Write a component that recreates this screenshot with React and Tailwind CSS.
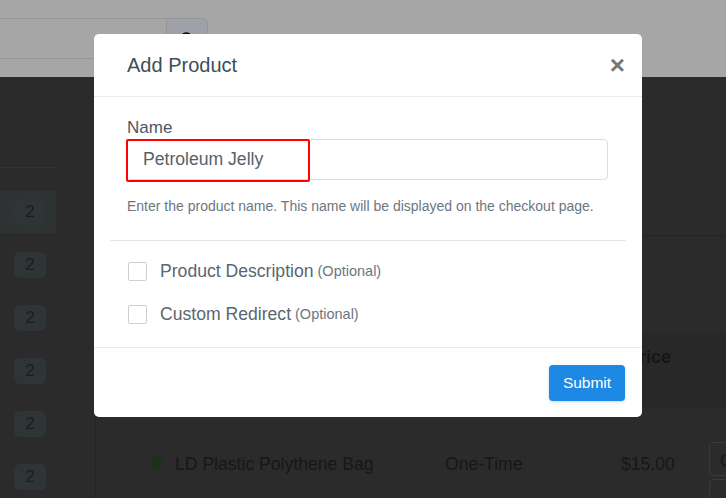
import { FiSearch } from "react-icons/fi";

const font = { fontFamily: '"Liberation Sans", Arial, sans-serif' };

export default function App() {
  return (
    <div
      className="relative w-[726px] h-[498px] overflow-hidden bg-[#2b2b2b]"
      style={font}
    >
      {/* TOP BAR */}
      <div className="h-[77px] bg-[#a6a6a6] pt-[18px] flex">
        <div className="w-[166px] h-[41px] border-y border-[#959595]" />
        <div className="w-[42px] h-[41px] bg-[#9ea2a8] border border-[#959595] rounded-tr-[5px] flex justify-center pt-[12px]">
          <FiSearch className="text-black w-[16px] h-[16px]" />
        </div>
      </div>

      <div className="flex h-[421px]">
        {/* SIDEBAR */}
        <div className="w-[96px] border-r border-[#262626] shrink-0">
          <div className="h-[91px] w-[56px] border-b border-[#333]" />
          <div className="pt-[17px]">
            {[0, 1, 2, 3, 4, 5].map((i) => (
              <div key={i} className="h-[53px] flex items-center">
                <div
                  className={
                    "w-[56px] h-[42px] flex items-center pl-[14px] " +
                    (i === 0 ? "bg-[#2e3232]" : "")
                  }
                >
                  <span className="w-[32px] h-[26px] rounded-[6px] bg-[#2f3436] flex items-center justify-center text-[17px] text-[#1c1c1c]">
                    2
                  </span>
                </div>
              </div>
            ))}
          </div>
        </div>

        {/* MAIN */}
        <div className="flex-1">
          <div className="h-[159px] border-b border-[#242424]" />
          <div className="h-[97px]" />
          <div className="h-[75px] bg-[#282828] flex items-center pl-[531px] pb-[26px]">
            <span className="text-[18px] font-bold text-[#161616]">Price</span>
          </div>
          <div className="h-[90px] flex items-start pt-[43px] text-[17.6px] text-[#171717]">
            <span className="ml-[55px] mt-[5px] w-[12px] h-[12px] rounded-full bg-[#1a3318]" />
            <span className="ml-[12px] w-[270px]">LD Plastic Polythene Bag</span>
            <span className="w-[176px]">One-Time</span>
            <span className="w-[88px]">$15.00</span>
            <div className="flex flex-col gap-[3px] -mt-[9px]">
              <div className="w-[40px] h-[34px] border border-[#3a3a3a] rounded-[4px] pl-[10px] pt-[5px]">C</div>
              <div className="w-[40px] h-[34px] border border-[#3a3a3a] rounded-[4px]" />
            </div>
          </div>
        </div>
      </div>

      {/* MODAL */}
      <div className="absolute left-[94px] top-[34px] w-[548px] h-[383px] bg-white rounded-[5px] flex flex-col">
        <div className="h-[63px] border-b border-[#e9ecef] flex items-center justify-between pl-[33px] pr-[17px]">
          <h2 className="text-[20px] text-[#3d4e5a]">Add Product</h2>
          <span className="text-[#777] text-[26px] font-bold leading-none">×</span>
        </div>

        <div className="px-[33px] pt-[20px]">
          <label className="block text-[17px] text-[#4a5863] leading-[22px]">Name</label>
          <div className="relative h-[41px] w-[481px] border border-[#dcdcdc] rounded-[4px] flex items-center pl-[15px] text-[17.6px] text-[#56626b]">
            Petroleum Jelly
            <div className="absolute -left-[2px] -top-[1px] w-[184px] h-[43px] border-2 border-[#f00] rounded-[2px]" />
          </div>
          <p className="mt-[17px] text-[14px] leading-[18px] text-[#6c7780]">
            Enter the product name. This name will be displayed on the checkout page.
          </p>
        </div>

        <div className="mx-[16px] mt-[25px] border-t border-[#e5e5e5]" />

        <div className="px-[34px] pt-[20px] flex flex-col gap-[23px]">
          {["Product Description", "Custom Redirect"].map((t) => (
            <div key={t} className="h-[20px] flex items-center">
              <span className="w-[19px] h-[19px] border border-[#cfcfcf] rounded-[2px]" />
              <span className="ml-[13px] text-[17.6px] text-[#5a6670]">{t}</span>
              <span className="ml-[4px] text-[14.5px] text-[#6c7780] mt-[2px]">(Optional)</span>
            </div>
          ))}
        </div>

        <div className="mt-[23px] border-t border-[#eaeaea] flex justify-end px-[17px] pt-[17px]">
          <button className="w-[76px] h-[36px] rounded-[4px] bg-[#1e88e5] text-white text-[15.5px] shadow-[0_1px_3px_rgba(30,136,229,0.3)]">
            Submit
          </button>
        </div>
      </div>
    </div>
  );
}
